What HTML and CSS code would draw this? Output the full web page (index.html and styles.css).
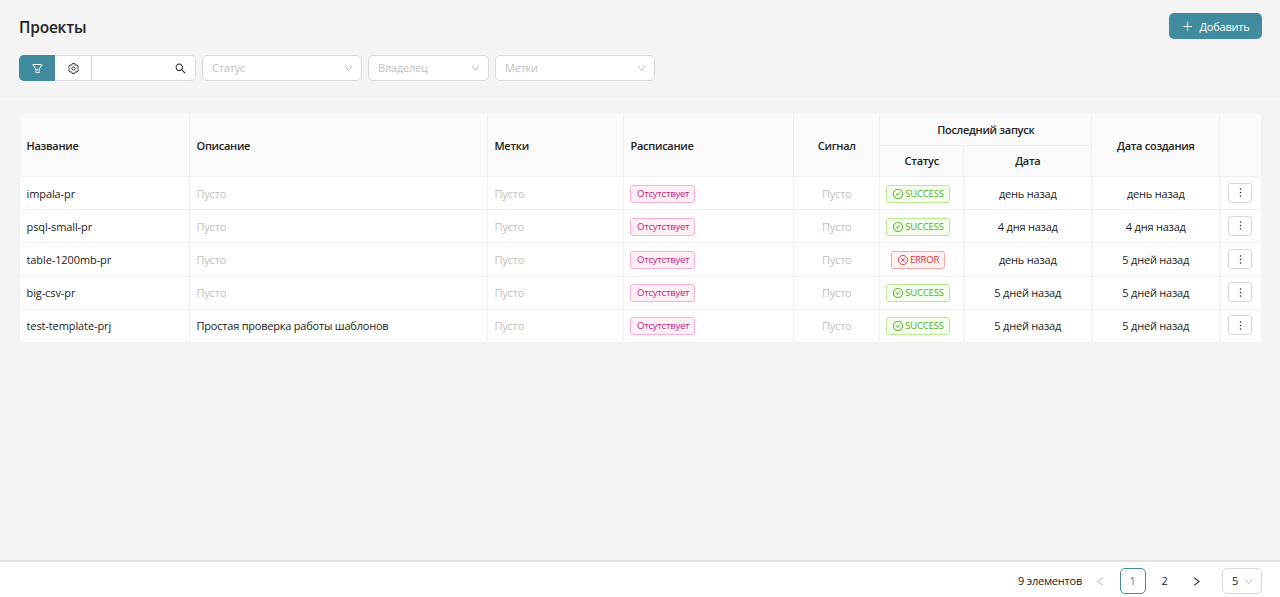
FILE: index.html
```
<!DOCTYPE html>
<html lang="ru">
<head>
  <meta charset="UTF-8">
  <meta name="viewport" content="width=device-width, initial-scale=1.0">
  <title>Проекты</title>
  <link rel="stylesheet" href="styles.css">
</head>
<body>
  <!-- icons -->
  <svg class="sprite" xmlns="http://www.w3.org/2000/svg">
    <symbol id="filter" viewBox="64 64 896 896"><path d="M880.1 154H143.9c-24.5 0-39.8 26.7-27.5 48L349 597.4V838c0 17.7 14.2 32 31.8 32h262.4c17.6 0 31.8-14.3 31.8-32V597.4L907.7 202c12.2-21.3-3.1-48-27.6-48zM603.4 798H420.6V642h182.9v156zm9.6-236.6l-9.5 16.6h-183l-9.5-16.6L212.7 226h598.6L613 561.4z"/></symbol>
    <symbol id="gear" viewBox="-448 -448 896 896">
      <g fill="none" stroke="currentColor" stroke-width="72" stroke-linejoin="round">
        <path d="M-140-285L-106-401H106L140-285 177-264 294-292 400-109 317-22V22L400 109 294 292 177 264 140 285 106 401H-106L-140 285-177 264-294 292-400 109-317 22V-22L-400-109-294-292-177-264z"/>
        <circle r="135"/>
      </g>
    </symbol>
    <symbol id="search" viewBox="64 64 896 896"><path d="M909.6 854.5L649.9 594.8C690.2 542.7 712 479 712 412c0-80.2-31.3-155.4-87.9-212.1-56.6-56.7-132-87.9-212.1-87.9s-155.5 31.3-212.1 87.9C143.2 256.5 112 331.8 112 412c0 80.1 31.3 155.5 87.9 212.1C256.5 680.8 331.8 712 412 712c67 0 130.6-21.8 182.7-62l259.7 259.6a8.2 8.2 0 0011.6 0l43.6-43.5a8.2 8.2 0 000-11.6zM570.4 570.4C528 612.7 471.8 636 412 636s-116-23.3-158.4-65.6C211.3 528 188 471.8 188 412s23.3-116.1 65.6-158.4C296 211.3 352.2 188 412 188s116.1 23.2 158.4 65.6S636 352.2 636 412s-23.3 116.1-65.6 158.4z"/></symbol>
    <symbol id="down" viewBox="64 64 896 896"><path d="M884 256h-75c-5.1 0-9.9 2.5-12.9 6.6L512 654.2 227.9 262.6c-3-4.1-7.8-6.6-12.9-6.6h-75c-6.5 0-10.3 7.4-6.5 12.7l352.6 486.1c12.8 17.6 39 17.6 51.7 0l352.6-486.1c3.9-5.3.1-12.7-6.4-12.7z"/></symbol>
    <symbol id="plus" viewBox="64 64 896 896"><path d="M474 152h76v720h-76zM152 474h720v76H152z"/></symbol>
    <symbol id="check" viewBox="64 64 896 896"><path d="M699 353h-46.9c-10.2 0-19.9 4.9-25.9 13.3L469 584.3l-71.2-98.8c-6-8.3-15.6-13.3-25.9-13.3H325c-6.5 0-10.3 7.4-6.5 12.7l124.6 172.8a31.8 31.8 0 0051.7 0l210.6-292c3.9-5.3.1-12.7-6.4-12.7z"/><path d="M512 64C264.6 64 64 264.6 64 512s200.6 448 448 448 448-200.6 448-448S759.4 64 512 64zm0 820c-205.4 0-372-166.6-372-372s166.6-372 372-372 372 166.6 372 372-166.6 372-372 372z"/></symbol>
    <symbol id="cross" viewBox="64 64 896 896">
      <g fill="none" stroke="currentColor" stroke-width="76"><circle cx="512" cy="512" r="410"/><path d="M365 350L659 674M659 350L365 674"/></g>
    </symbol>
    <symbol id="more" viewBox="64 64 896 896"><circle cx="512" cy="232" r="60"/><circle cx="512" cy="512" r="60"/><circle cx="512" cy="792" r="60"/></symbol>
    <symbol id="left" viewBox="64 64 896 896"><path d="M710 190L300 512l410 322" fill="none" stroke="currentColor" stroke-width="84"/></symbol>
    <symbol id="right" viewBox="64 64 896 896"><path d="M314 190l410 322-410 322" fill="none" stroke="currentColor" stroke-width="84"/></symbol>
  </svg>

  <header class="page-header">
    <div class="title-row">
      <h1>Проекты</h1>
      <button class="btn-add" type="button"><svg class="icon"><use href="#plus"/></svg><span>Добавить</span></button>
    </div>
    <div class="filters">
      <div class="search-group">
        <button class="btn-filter" type="button"><svg class="icon"><use href="#filter"/></svg></button>
        <button class="btn-settings" type="button"><svg class="icon"><use href="#gear"/></svg></button>
        <div class="search-box"><input type="text"><svg class="icon"><use href="#search"/></svg></div>
      </div>
      <div class="select"><span>Статус</span><svg class="icon"><use href="#down"/></svg></div>
      <div class="select select-owner"><span>Владелец</span><svg class="icon"><use href="#down"/></svg></div>
      <div class="select"><span>Метки</span><svg class="icon"><use href="#down"/></svg></div>
    </div>
  </header>

  <main>
    <table class="projects">
      <colgroup>
        <col class="c-name"><col class="c-desc"><col class="c-tags"><col class="c-schedule"><col class="c-signal">
        <col class="c-status"><col class="c-date"><col class="c-date"><col class="c-menu">
      </colgroup>
      <thead>
        <tr>
          <th rowspan="2">Название</th>
          <th rowspan="2">Описание</th>
          <th rowspan="2">Метки</th>
          <th rowspan="2">Расписание</th>
          <th rowspan="2" class="center">Сигнал</th>
          <th colspan="2" class="center">Последний запуск</th>
          <th rowspan="2" class="center">Дата создания</th>
          <th rowspan="2"></th>
        </tr>
        <tr>
          <th class="center">Статус</th>
          <th class="center">Дата</th>
        </tr>
      </thead>
      <tbody>
        <tr>
          <td class="name">impala-pr</td>
          <td class="empty">Пусто</td>
          <td class="empty">Пусто</td>
          <td class="tags"><span class="tag tag-none">Отсутствует</span></td>
          <td class="empty center">Пусто</td>
          <td class="tags center"><span class="tag tag-success"><svg class="icon"><use href="#check"/></svg>SUCCESS</span></td>
          <td class="center">день назад</td>
          <td class="center">день назад</td>
          <td class="menu center"><button class="btn-more" type="button"><svg class="icon"><use href="#more"/></svg></button></td>
        </tr>
        <tr>
          <td class="name">psql-small-pr</td>
          <td class="empty">Пусто</td>
          <td class="empty">Пусто</td>
          <td class="tags"><span class="tag tag-none">Отсутствует</span></td>
          <td class="empty center">Пусто</td>
          <td class="tags center"><span class="tag tag-success"><svg class="icon"><use href="#check"/></svg>SUCCESS</span></td>
          <td class="center">4 дня назад</td>
          <td class="center">4 дня назад</td>
          <td class="menu center"><button class="btn-more" type="button"><svg class="icon"><use href="#more"/></svg></button></td>
        </tr>
        <tr>
          <td class="name">table-1200mb-pr</td>
          <td class="empty">Пусто</td>
          <td class="empty">Пусто</td>
          <td class="tags"><span class="tag tag-none">Отсутствует</span></td>
          <td class="empty center">Пусто</td>
          <td class="tags center"><span class="tag tag-error"><svg class="icon"><use href="#cross"/></svg>ERROR</span></td>
          <td class="center">день назад</td>
          <td class="center">5 дней назад</td>
          <td class="menu center"><button class="btn-more" type="button"><svg class="icon"><use href="#more"/></svg></button></td>
        </tr>
        <tr>
          <td class="name">big-csv-pr</td>
          <td class="empty">Пусто</td>
          <td class="empty">Пусто</td>
          <td class="tags"><span class="tag tag-none">Отсутствует</span></td>
          <td class="empty center">Пусто</td>
          <td class="tags center"><span class="tag tag-success"><svg class="icon"><use href="#check"/></svg>SUCCESS</span></td>
          <td class="center">5 дней назад</td>
          <td class="center">5 дней назад</td>
          <td class="menu center"><button class="btn-more" type="button"><svg class="icon"><use href="#more"/></svg></button></td>
        </tr>
        <tr>
          <td class="name">test-template-prj</td>
          <td>Простая проверка работы шаблонов</td>
          <td class="empty">Пусто</td>
          <td class="tags"><span class="tag tag-none">Отсутствует</span></td>
          <td class="empty center">Пусто</td>
          <td class="tags center"><span class="tag tag-success"><svg class="icon"><use href="#check"/></svg>SUCCESS</span></td>
          <td class="center">5 дней назад</td>
          <td class="center">5 дней назад</td>
          <td class="menu center"><button class="btn-more" type="button"><svg class="icon"><use href="#more"/></svg></button></td>
        </tr>
      </tbody>
    </table>
  </main>

  <footer class="pagination">
    <span class="total">9 элементов</span>
    <button class="page disabled" type="button"><svg class="icon"><use href="#left"/></svg></button>
    <button class="page active" type="button">1</button>
    <button class="page" type="button">2</button>
    <button class="page" type="button"><svg class="icon"><use href="#right"/></svg></button>
    <div class="page-size"><span>5</span><svg class="icon"><use href="#down"/></svg></div>
  </footer>
</body>
</html>
```
FILE: styles.css
```
* {
  box-sizing: border-box;
}

body {
  margin: 0;
  height: 597px;
  display: flex;
  flex-direction: column;
  background: #f4f4f4;
  color: #222;
  font-family: "Open Sans", "Noto Sans", sans-serif;
  font-size: 11px;
  line-height: 18px;
  letter-spacing: -0.21px;
  overflow: hidden;
}

button,
input {
  font: inherit;
  letter-spacing: inherit;
  color: inherit;
  margin: 0;
  padding: 0;
  border: none;
  background: none;
}

.sprite {
  display: none;
}

.icon {
  width: 11px;
  height: 11px;
  fill: currentColor;
  flex: none;
}

/* header */
.page-header {
  height: 97px;
  padding: 13px 18px 0 19px;
  border-bottom: 1px solid #f0f0f0;
}

.title-row {
  display: flex;
  justify-content: space-between;
  height: 42px;
}

h1 {
  margin: 0;
  font-size: 15.5px;
  font-weight: 600;
  line-height: 29px;
}

.btn-add {
  display: flex;
  align-items: center;
  justify-content: center;
  gap: 6px;
  width: 93px;
  height: 26px;
  padding: 1px 0 0 1px;
  border-radius: 5px;
  background: #408c9e;
  color: #fff;
}

.filters {
  display: flex;
  gap: 6px;
}

.search-group {
  display: flex;
  width: 177px;
  height: 26px;
}

.btn-filter,
.btn-settings {
  display: flex;
  align-items: center;
  justify-content: center;
  flex: none;
  width: 36px;
}

.btn-filter {
  border-radius: 5px 0 0 5px;
  background: #408c9e;
  color: #fff;
}

.btn-settings {
  width: 37px;
  padding-left: 1px;
  background: #fff;
  border: 1px solid #d9d9d9;
  border-left: none;
}

.search-box {
  display: flex;
  align-items: center;
  flex: 1;
  min-width: 0;
  padding-right: 9px;
  background: #fff;
  border: 1px solid #d9d9d9;
  border-left: none;
  border-radius: 0 5px 5px 0;
}

.search-box input {
  flex: 1;
  min-width: 0;
}

.select {
  display: flex;
  align-items: center;
  justify-content: space-between;
  width: 160px;
  height: 26px;
  padding: 0 8px 0 9px;
  background: #fff;
  border: 1px solid #d9d9d9;
  border-radius: 5px;
  color: #bfbfbf;
}

.select-owner {
  width: 121px;
}

.select .icon,
.page-size .icon {
  width: 9px;
  height: 9px;
}

/* table */
main {
  flex: 1;
  padding: 17px 19px 0;
}

.projects {
  width: 1243px;
  table-layout: fixed;
  border-collapse: separate;
  border-spacing: 0;
  border-left: 1px solid #f0f0f0;
  border-radius: 6px;
  overflow: hidden;
  background: #fff;
}

.c-name { width: 170px; }
.c-desc { width: 298px; }
.c-tags { width: 136px; }
.c-schedule { width: 170px; }
.c-signal { width: 86px; }
.c-status { width: 84px; }
.c-date { width: 128px; }
.c-menu { width: 42px; }

.projects th,
.projects td {
  padding: 1px 6px 0 6.5px;
  border-right: 1px solid #f0f0f0;
  border-bottom: 1px solid #f0f0f0;
  text-align: left;
  white-space: nowrap;
}

.projects th {
  height: 31.5px;
  background: #fafafa;
  font-weight: 600;
  letter-spacing: -0.28px;
}

.projects td {
  height: 33.2px;
}

.projects .name {
  letter-spacing: -0.1px;
}

.projects .center {
  text-align: center;
}

.projects .tags {
  padding: 0 6px;
}

.projects .menu {
  padding: 0 6px 1px 5px;
}

.projects .empty {
  color: #bfbfbf;
}

.tag {
  display: inline-flex;
  align-items: center;
  gap: 2px;
  height: 18px;
  margin-right: 7px;
  padding: 0 5px 0 6px;
  border: 1px solid;
  border-radius: 3px;
  font-size: 9.5px;
  line-height: 16px;
  vertical-align: middle;
}

.tag .icon {
  width: 10px;
  height: 10px;
}

.tag-none {
  color: #c41d7f;
  background: #fff0f6;
  border-color: #ffadd2;
}

.tag-success {
  color: #52b02a;
  background: #f6ffed;
  border-color: #b7eb8f;
}

.tag-error {
  color: #dc2f3c;
  background: #fff1f0;
  border-color: #ffa39e;
}

.btn-more {
  display: inline-flex;
  align-items: center;
  justify-content: center;
  width: 24px;
  height: 20px;
  background: #fff;
  border: 1px solid #d9d9d9;
  border-radius: 3px;
  vertical-align: middle;
}

/* footer */
.pagination {
  display: flex;
  align-items: center;
  justify-content: flex-end;
  gap: 6px;
  height: 37px;
  padding: 3px 18px 0 0;
  background: #fff;
  border-top: 2px solid #e2e2e2;
}

.page {
  display: flex;
  align-items: center;
  justify-content: center;
  width: 26px;
  height: 26px;
  padding-right: 1px;
  border-radius: 5px;
}

.page.active {
  border: 1px solid #408c9e;
  color: #408c9e;
}

.page.disabled {
  color: #bfbfbf;
}

.page-size {
  display: flex;
  align-items: center;
  justify-content: space-between;
  width: 40px;
  height: 26px;
  margin-left: 6px;
  padding: 0 8px 0 9px;
  border: 1px solid #d9d9d9;
  border-radius: 5px;
}

.page-size .icon {
  color: #bfbfbf;
}
```
